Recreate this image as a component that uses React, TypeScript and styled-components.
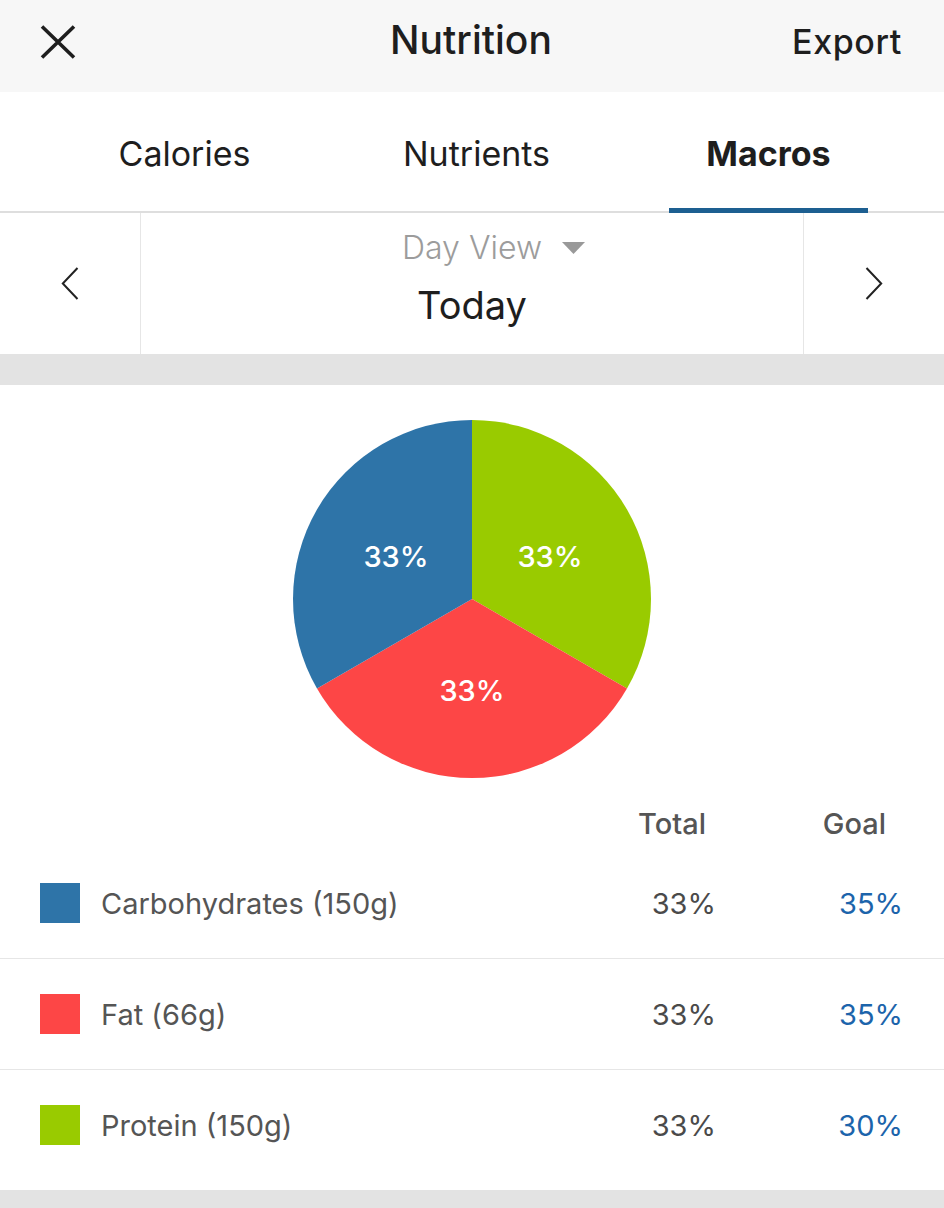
import React from "react";
import styled, { createGlobalStyle } from "styled-components";

const GlobalStyle = createGlobalStyle`
  html, body {
    margin: 0;
    padding: 0;
    background: #e3e3e3;
    font-family: Inter, "Liberation Sans", Arial, sans-serif;
    -webkit-font-smoothing: antialiased;
  }
  * { box-sizing: border-box; }
`;

const Page = styled.div`
  width: 944px;
  min-height: 1208px;
  background: #e3e3e3;
`;

const Header = styled.header`
  height: 92px;
  background: #f7f7f7;
  display: grid;
  grid-template-columns: 1fr auto 1fr;
  align-items: center;
  padding: 0 42px 0 40px;
`;

const CloseButton = styled.button`
  justify-self: start;
  width: 36px;
  height: 34px;
  padding: 0;
  border: none;
  background: none;
  display: flex;
  margin-top: -8px;
`;

const Title = styled.h1`
  margin: 0;
  font-size: 39px;
  font-weight: 500;
  color: #1e1e1e;
  margin-top: -14px;
`;

const ExportButton = styled.button`
  justify-self: end;
  border: none;
  background: none;
  padding: 0;
  font-family: inherit;
  font-size: 34px;
  font-weight: 500;
  letter-spacing: 0.6px;
  color: #1e1e1e;
  margin-top: -10px;
`;

const Tabs = styled.nav`
  height: 121px;
  background: #fff;
  border-bottom: 2px solid #dedede;
  display: flex;
  justify-content: space-between;
  padding: 0 76px 0 85px;
`;

const Tab = styled.div<{ $active?: boolean }>`
  position: relative;
  width: 199px;
  display: flex;
  align-items: center;
  justify-content: center;
  padding-top: 4px;
  font-size: 34px;
  font-weight: ${(p) => (p.$active ? 700 : 400)};
  color: #1e1e1e;
  &::after {
    content: "";
    display: ${(p) => (p.$active ? "block" : "none")};
    position: absolute;
    left: 0;
    right: 0;
    bottom: -2px;
    height: 5px;
    background: #1d5f91;
  }
`;

const DayNav = styled.div`
  height: 141px;
  background: #fff;
  display: grid;
  grid-template-columns: 140px 1fr 140px;
`;

const NavArrow = styled.button`
  border: none;
  background: none;
  padding: 0;
  display: flex;
  align-items: center;
  justify-content: center;
`;

const DayCenter = styled.div`
  border-left: 1px solid #e6e6e6;
  border-right: 1px solid #e6e6e6;
  display: flex;
  flex-direction: column;
  align-items: center;
  padding-top: 15px;
  gap: 12px;
`;

const ViewSelect = styled.div`
  position: relative;
  line-height: 40px;
  font-size: 32px;
  font-weight: 300;
  color: #9c9c9c;
`;

const Caret = styled.svg`
  position: absolute;
  left: 100%;
  top: 14px;
  margin-left: 20px;
`;

const DayLabel = styled.div`
  line-height: 50px;
  font-size: 38px;
  font-weight: 400;
  color: #1e1e1e;
`;

const MacroSection = styled.section`
  margin-top: 31px;
  background: #fff;
  padding: 35px 0 10px;
`;

const ChartWrap = styled.div`
  display: flex;
  justify-content: center;
`;

const TableGrid = styled.div`
  display: grid;
  grid-template-columns: 1fr 130px 187px;
  align-items: center;
  padding: 0 41px 0 40px;
`;

const TableHead = styled(TableGrid)`
  height: 70px;
  padding-top: 22px;
  align-items: start;
  line-height: 48px;
  font-size: 29px;
  font-weight: 500;
  color: #555;
`;

const HeadCell = styled.div<{ $pad: number }>`
  text-align: right;
  padding-right: ${(p) => p.$pad}px;
`;

const Row = styled(TableGrid)`
  height: 111px;
  border-bottom: 1px solid #e6e6e6;
  &:last-child {
    border-bottom: none;
    height: 110px;
  }
`;

const NameCell = styled.div`
  display: flex;
  align-items: center;
  gap: 21px;
  font-size: 29px;
  color: #555;
`;

const Swatch = styled.span<{ $color: string }>`
  width: 40px;
  height: 40px;
  background: ${(p) => p.$color};
  flex: none;
`;

const ValueCell = styled.div<{ $goal?: boolean }>`
  text-align: right;
  font-size: 29px;
  color: ${(p) => (p.$goal ? "#1c64ab" : "#4a4a4a")};
`;

const BLUE = "#2e74a8";
const RED = "#fd4646";
const GREEN = "#99cb00";

const macros = [
  { name: "Carbohydrates (150g)", color: BLUE, total: "33%", goal: "35%" },
  { name: "Fat (66g)", color: RED, total: "33%", goal: "35%" },
  { name: "Protein (150g)", color: GREEN, total: "33%", goal: "30%" },
];

function Pie() {
  const r = 179;
  const c = 179;
  const pt = (deg: number) => {
    const a = (deg * Math.PI) / 180;
    return [c + r * Math.sin(a), c - r * Math.cos(a)];
  };
  const [x0, y0] = pt(0);
  const [x1, y1] = pt(120);
  const [x2, y2] = pt(240);
  return (
    <svg width="358" height="358" viewBox="0 0 358 358">
      <path d={`M${c},${c} L${x0},${y0} A${r},${r} 0 0 1 ${x1},${y1} Z`} fill={GREEN} />
      <path d={`M${c},${c} L${x1},${y1} A${r},${r} 0 0 1 ${x2},${y2} Z`} fill={RED} />
      <path d={`M${c},${c} L${x2},${y2} A${r},${r} 0 0 1 ${x0},${y0} Z`} fill={BLUE} />
      <g
        fill="#fff"
        fontFamily="Inter, 'Liberation Sans', Arial, sans-serif"
        fontSize="29"
        fontWeight="500"
        textAnchor="middle"
        dominantBaseline="central"
      >
        <text x={c - 76} y={c - 43}>33%</text>
        <text x={c + 78} y={c - 43}>33%</text>
        <text x={c} y={c + 91}>33%</text>
      </g>
    </svg>
  );
}

export default function App() {
  return (
    <Page>
      <GlobalStyle />
      <Header>
        <CloseButton aria-label="Close">
          <svg width="36" height="34" viewBox="0 0 36 34">
            <path d="M2 1.5 L34 32.5 M34 1.5 L2 32.5" stroke="#1e1e1e" strokeWidth="3.6" fill="none" />
          </svg>
        </CloseButton>
        <Title>Nutrition</Title>
        <ExportButton>Export</ExportButton>
      </Header>
      <Tabs>
        <Tab>Calories</Tab>
        <Tab>Nutrients</Tab>
        <Tab $active>Macros</Tab>
      </Tabs>
      <DayNav>
        <NavArrow aria-label="Previous day">
          <svg width="18" height="33" viewBox="0 0 18 33">
            <path d="M16.5 1 L1.8 16.5 L16.5 32" stroke="#222" strokeWidth="2" fill="none" />
          </svg>
        </NavArrow>
        <DayCenter>
          <ViewSelect>
            Day View
            <Caret width="23" height="12" viewBox="0 0 23 12">
              <path d="M0 0 H23 L11.5 12 Z" fill="#999" />
            </Caret>
          </ViewSelect>
          <DayLabel>Today</DayLabel>
        </DayCenter>
        <NavArrow aria-label="Next day">
          <svg width="18" height="33" viewBox="0 0 18 33">
            <path d="M1.5 1 L16.2 16.5 L1.5 32" stroke="#222" strokeWidth="2" fill="none" />
          </svg>
        </NavArrow>
      </DayNav>
      <MacroSection>
        <ChartWrap>
          <Pie />
        </ChartWrap>
        <TableHead>
          <div />
          <HeadCell $pad={10}>Total</HeadCell>
          <HeadCell $pad={17}>Goal</HeadCell>
        </TableHead>
        {macros.map((m) => (
          <Row key={m.name}>
            <NameCell>
              <Swatch $color={m.color} />
              {m.name}
            </NameCell>
            <ValueCell>{m.total}</ValueCell>
            <ValueCell $goal>{m.goal}</ValueCell>
          </Row>
        ))}
      </MacroSection>
    </Page>
  );
}
